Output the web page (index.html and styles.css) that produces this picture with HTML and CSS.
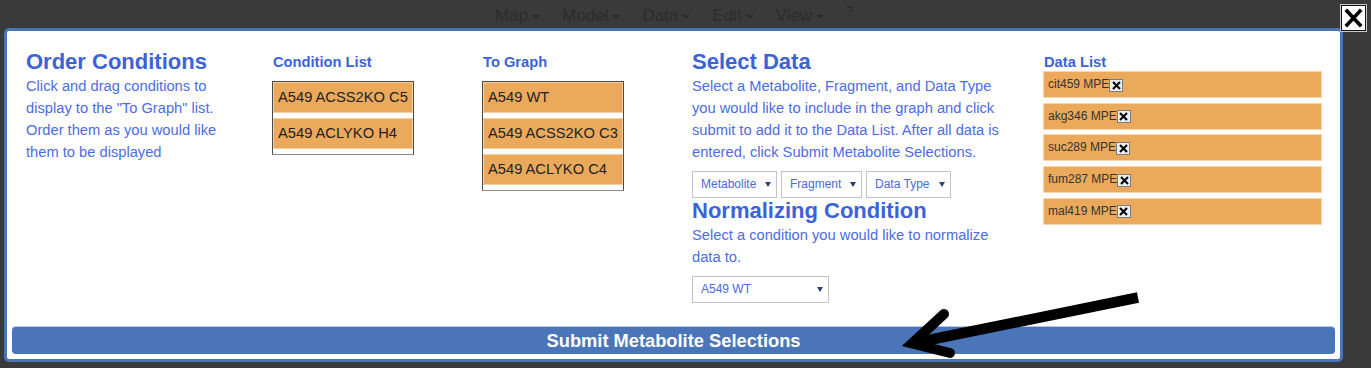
FILE: index.html
```html
<!DOCTYPE html>
<html lang="en">
<head>
<meta charset="utf-8">
<title>Order Conditions</title>
<link rel="stylesheet" href="styles.css">
</head>
<body>
<header class="navbar">
  <span class="nav-item">Map<i class="caret"></i></span>
  <span class="nav-item">Model<i class="caret"></i></span>
  <span class="nav-item">Data<i class="caret"></i></span>
  <span class="nav-item">Edit<i class="caret"></i></span>
  <span class="nav-item">View<i class="caret"></i></span>
  <span class="nav-help">?</span>
</header>

<button class="close-btn" aria-label="Close">
  <span class="close-inner">
    <svg width="19" height="20" viewBox="0 0 19 20"><path d="M3 3 L16 17 M16 3 L3 17" stroke="#000" stroke-width="3.6" stroke-linecap="square" fill="none"/></svg>
  </span>
</button>

<div class="modal">
  <div class="modal-body">
    <section class="col">
      <h2 class="title">Order Conditions</h2>
      <p class="desc desc-intro">Click and drag conditions to display to the "To Graph" list. Order them as you would like them to be displayed</p>
    </section>

    <section class="col">
      <h3 class="list-title">Condition List</h3>
      <ul class="drag-list">
        <li class="drag-item">A549 ACSS2KO C5</li>
        <li class="drag-item">A549 ACLYKO H4</li>
      </ul>
    </section>

    <section class="col">
      <h3 class="list-title">To Graph</h3>
      <ul class="drag-list">
        <li class="drag-item">A549 WT</li>
        <li class="drag-item">A549 ACSS2KO C3</li>
        <li class="drag-item">A549 ACLYKO C4</li>
      </ul>
    </section>

    <section class="col col-select">
      <h2 class="title">Select Data</h2>
      <p class="desc">Select a Metabolite, Fragment, and Data Type you would like to include in the graph and click submit to add it to the Data List. After all data is entered, click Submit Metabolite Selections.</p>
      <div class="select-row">
        <div class="fake-select w-metab">Metabolite<i class="sel-arrow"></i></div>
        <div class="fake-select w-frag">Fragment<i class="sel-arrow"></i></div>
        <div class="fake-select w-type">Data Type<i class="sel-arrow"></i></div>
      </div>
      <h2 class="title title-norm">Normalizing Condition</h2>
      <p class="desc">Select a condition you would like to normalize data to.</p>
      <div class="select-row">
        <div class="fake-select w-norm">A549 WT<i class="sel-arrow"></i></div>
      </div>
    </section>

    <section class="col">
      <h3 class="list-title list-title-data">Data List</h3>
      <ul class="data-list">
        <li class="data-item">cit459 MPE<span class="x-box"><svg width="11" height="11" viewBox="0 0 11 11"><path d="M2 2 L9 9 M9 2 L2 9" stroke="#000" stroke-width="2" fill="none"/></svg></span></li>
        <li class="data-item">akg346 MPE<span class="x-box"><svg width="11" height="11" viewBox="0 0 11 11"><path d="M2 2 L9 9 M9 2 L2 9" stroke="#000" stroke-width="2" fill="none"/></svg></span></li>
        <li class="data-item">suc289 MPE<span class="x-box"><svg width="11" height="11" viewBox="0 0 11 11"><path d="M2 2 L9 9 M9 2 L2 9" stroke="#000" stroke-width="2" fill="none"/></svg></span></li>
        <li class="data-item">fum287 MPE<span class="x-box"><svg width="11" height="11" viewBox="0 0 11 11"><path d="M2 2 L9 9 M9 2 L2 9" stroke="#000" stroke-width="2" fill="none"/></svg></span></li>
        <li class="data-item">mal419 MPE<span class="x-box"><svg width="11" height="11" viewBox="0 0 11 11"><path d="M2 2 L9 9 M9 2 L2 9" stroke="#000" stroke-width="2" fill="none"/></svg></span></li>
      </ul>
    </section>
  </div>

  <div class="modal-footer">
    <button class="submit-btn">Submit Metabolite Selections</button>
  </div>
</div>

<svg class="annot-arrow" width="1371" height="368" viewBox="0 0 1371 368">
  <path d="M1138 297.5 L914 343" stroke="#000" stroke-width="10.5" fill="none" stroke-linecap="butt"/>
  <path d="M944 314 L912 343.5 L950 353" stroke="#000" stroke-width="10" fill="none" stroke-linecap="round" stroke-linejoin="miter" stroke-miterlimit="6"/>
</svg>
</body>
</html>
```

FILE: styles.css
```css
* { box-sizing: border-box; }

html, body {
  margin: 0;
  padding: 0;
}

body {
  background: #3a3a3a;
  font-family: "Liberation Sans", Arial, sans-serif;
  width: 1371px;
  height: 368px;
  overflow: hidden;
  position: relative;
}

/* background navbar (dimmed under overlay) */
.navbar {
  height: 28px;
  display: flex;
  align-items: center;
  padding-left: 484px;
  color: #2c2c2c;
  font-size: 17px;
  line-height: 20px;
}

.nav-item {
  padding: 4px 11px 0;
  display: inline-flex;
  align-items: center;
}

.caret {
  display: inline-block;
  width: 0;
  height: 0;
  margin-left: 4px;
  margin-top: 2px;
  border-left: 4px solid transparent;
  border-right: 4px solid transparent;
  border-top: 4px solid #2c2c2c;
}

.nav-help {
  font-size: 14px;
  margin-left: 10px;
  margin-top: -6px;
}

/* close button */
.close-btn {
  position: absolute;
  top: 4px;
  right: 4px;
  width: 27px;
  height: 28px;
  padding: 0;
  margin: 0;
  border: 1px solid #c9c9c9;
  background: #111;
  display: flex;
  align-items: center;
  justify-content: center;
}

.close-inner {
  width: 23px;
  height: 24px;
  background: #fff;
  display: flex;
  align-items: center;
  justify-content: center;
}

/* modal */
.modal {
  margin-left: 4px;
  width: 1339px;
  height: 334px;
  border: 3px solid #4a76b8;
  border-radius: 5px;
  background: #fff;
  display: flex;
  flex-direction: column;
}

.modal-body {
  display: grid;
  grid-template-columns: 246px 210px 210px 351px 279px;
  padding: 19px 0 0 19px;
  align-items: start;
}

.col {
  min-width: 0;
}

.title {
  margin: 0;
  font-size: 22px;
  line-height: 24px;
  font-weight: bold;
  color: #3b62d9;
}

.title-norm {
  margin-top: 1px;
}

.desc {
  margin: 1px 0 0;
  font-size: 14.7px;
  line-height: 22px;
  color: #4d6ce3;
  width: 316px;
}

.desc-intro {
  width: 212px;
}

.list-title {
  margin: 2.5px 0 10.5px;
  padding-left: 1px;
  font-size: 14.7px;
  line-height: 18px;
  font-weight: bold;
  color: #3b62d9;
}

.list-title-data {
  margin-bottom: 0.5px;
}

.drag-list {
  list-style: none;
  margin: 0;
  padding: 0;
  width: 142px;
  border: 1px solid #4a4a4a;
  border-bottom-color: #8c8c8c;
}

.drag-item {
  height: 31px;
  margin-bottom: 5px;
  padding: 0 4px;
  border: 1px solid #f4d0a0;
  background: #ebaa5b;
  color: #222;
  font-size: 14.7px;
  line-height: 29px;
  white-space: nowrap;
}

.select-row {
  display: flex;
  gap: 4px;
  margin-top: 8px;
}

.fake-select {
  position: relative;
  height: 27px;
  border: 1px solid #c3c3c3;
  background: #fff;
  color: #4b69dc;
  font-size: 12px;
  line-height: 25px;
  padding-left: 8px;
}

.w-metab { width: 85px; }
.w-frag { width: 81px; }
.w-type { width: 85px; }
.w-norm { width: 137px; }

.sel-arrow {
  position: absolute;
  right: 5px;
  top: 10px;
  width: 0;
  height: 0;
  border-left: 3px solid transparent;
  border-right: 3px solid transparent;
  border-top: 5px solid #2b3f7a;
}

.data-list {
  list-style: none;
  margin: 0;
  padding: 0;
  width: 279px;
}

.data-item {
  height: 27px;
  margin-bottom: 4.7px;
  padding: 0 4px;
  border: 1px solid #f6d6ab;
  background: #ebaa5b;
  color: #333;
  font-size: 12px;
  line-height: 25px;
  display: flex;
  align-items: center;
  white-space: nowrap;
}

.x-box {
  width: 14px;
  height: 13px;
  border: 1px solid #7d7d7d;
  background: #ececec;
  display: inline-flex;
  align-items: center;
  justify-content: center;
  margin-left: 0;
  margin-top: 1px;
}

.modal-footer {
  margin-top: auto;
  padding: 0 5px 5px;
}

.submit-btn {
  display: block;
  width: 100%;
  height: 27px;
  margin: 0;
  padding: 0;
  border: none;
  border-radius: 4px;
  background: #4a75b8;
  box-shadow: 0 -1px 0 #b5c6e2;
  color: #fff;
  font-family: "Liberation Sans", Arial, sans-serif;
  font-size: 18.3px;
  font-weight: bold;
  line-height: 27px;
  text-align: center;
}

/* annotation overlay arrow */
.annot-arrow {
  position: absolute;
  top: 0;
  left: 0;
  pointer-events: none;
}
```
